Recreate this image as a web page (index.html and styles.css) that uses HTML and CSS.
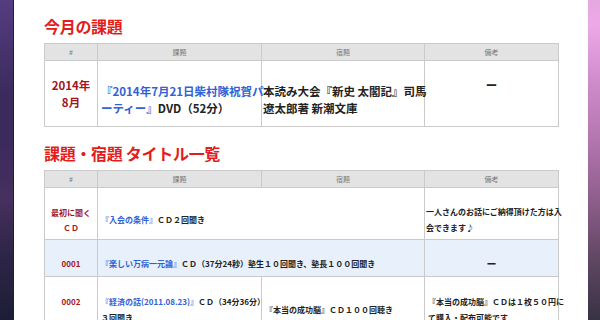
FILE: index.html
```html
<!DOCTYPE html>
<html lang="ja">
<head>
<meta charset="utf-8">
<link rel="stylesheet" href="styles.css">
</head>
<body>
<div class="page">
  <div class="edge-left"></div>
  <main class="main">
    <h2 class="heading">今月の課題</h2>
    <table class="grid grid-month">
      <colgroup><col class="c1"><col class="c2"><col class="c3"><col class="c4"></colgroup>
      <thead>
        <tr><th>#</th><th>課題</th><th>宿題</th><th>備考</th></tr>
      </thead>
      <tbody>
        <tr class="row-month">
          <td class="num">2014年<br>8月</td>
          <td class="txt shift"><a class="link">『2014年7月21日柴村隊祝賀パ<br>ーティー』</a>DVD（52分）</td>
          <td class="txt shift flush">本読み大会『新史 太閣記』司馬<br>遼太郎著 新潮文庫</td>
          <td class="dash">ー<br>&nbsp;</td>
        </tr>
      </tbody>
    </table>

    <h2 class="heading heading-second">課題・宿題 タイトル一覧</h2>
    <table class="grid grid-list">
      <colgroup><col class="c1"><col class="c2"><col class="c3"><col class="c4"></colgroup>
      <thead>
        <tr><th>#</th><th>課題</th><th>宿題</th><th>備考</th></tr>
      </thead>
      <tbody>
        <tr class="r1">
          <td class="num num-first">最初に聞く<br>ＣＤ</td>
          <td class="txt" colspan="2"><a class="link">『入会の条件』</a>ＣＤ２回聞き</td>
          <td class="txt flush">一人さんのお話にご納得頂けた方は入<br>会できます♪</td>
        </tr>
        <tr class="r2">
          <td class="num">0001</td>
          <td class="txt" colspan="2"><a class="link">『楽しい万病一元論』</a>ＣＤ（37分24秒）塾生１０回聞き、塾長１００回聞き</td>
          <td class="dash dash-small">ー</td>
        </tr>
        <tr class="r3">
          <td class="num">0002<br>&nbsp;</td>
          <td class="txt"><a class="link">『経済の話(2011.08.23)』</a>ＣＤ（34分36分）<br>３回聞き</td>
          <td class="txt">『本当の成功脳』ＣＤ１００回聴き</td>
          <td class="txt">『本当の成功脳』ＣＤは１枚５０円に<br>て購入・配布可能です</td>
        </tr>
      </tbody>
    </table>
  </main>
  <div class="edge-right"></div>
</div>
</body>
</html>
```

FILE: styles.css
```css
html, body {
  margin: 0;
  padding: 0;
  width: 600px;
  height: 320px;
  overflow: hidden;
  background: #fff;
  font-family: "Noto Sans CJK JP", "Noto Sans", sans-serif;
}

.page {
  display: flex;
  height: 320px;
}

.edge-left {
  width: 13px;
  flex: none;
  border-right: 1px solid #241a34;
  background: linear-gradient(180deg, #553d80 0%, #4a3672 12%, #3a2b5c 30%, #3b2b5c 45%, #46305f 62%, #2d2546 80%, #1d1d36 100%);
}

.edge-right {
  width: 12px;
  flex: none;
  background: linear-gradient(180deg, #e5a8e0 0%, #eda8e8 8%, #d08ccc 25%, #b778b2 42%, #8f5f8c 62%, #5d4660 82%, #383244 100%);
}

.main {
  flex: 1;
  padding: 15px 0 0 30px;
  overflow: hidden;
}

.heading {
  margin: 0 0 6px 0;
  font-size: 16px;
  line-height: 22px;
  font-weight: 700;
  color: #e21d1c;
  letter-spacing: -0.3px;
}

.heading-second {
  margin-top: 15px;
  margin-bottom: 6px;
}

.grid {
  border-collapse: collapse;
  table-layout: fixed;
  width: 514px;
}

.c1 { width: 53px; }
.c2 { width: 164px; }
.c3 { width: 163px; }
.c4 { width: 134px; }

.grid th,
.grid td {
  border: 1px solid #cacaca;
  padding: 0;
}

.grid thead tr {
  height: 17px;
}

.grid th {
  background: #e3e3e3;
  font-size: 7px;
  font-weight: 400;
  color: #777;
  line-height: 10px;
  text-align: center;
}

.grid td {
  font-weight: 700;
  color: #222;
  vertical-align: middle;
  white-space: nowrap;
}

.grid-month td {
  font-size: 11.5px;
  line-height: 17px;
}

.grid-month .row-month {
  height: 66px;
}

.grid-month td.shift {
  padding-top: 12px;
}

.grid td.num {
  text-align: center;
  color: #a3141b;
}

.grid td.txt {
  text-align: left;
  padding-left: 3px;
}

.grid td.flush {
  padding-left: 1px;
}

.link {
  color: #2f62d6;
}

.grid td.dash {
  text-align: center;
  color: #222;
}

.grid-list td {
  font-size: 8px;
  line-height: 16px;
}

.grid-list tbody td {
  padding-top: 12px;
}

.grid-list .r1 { height: 52px; }
.grid-list .r2 { height: 37px; }
.grid-list .r2 td { background: #e7f0fb; }
.grid-list .r3 { height: 54px; }

.grid td.num-first {
  line-height: 15px;
}

.grid td.dash-small {
  font-size: 10px;
}
```
